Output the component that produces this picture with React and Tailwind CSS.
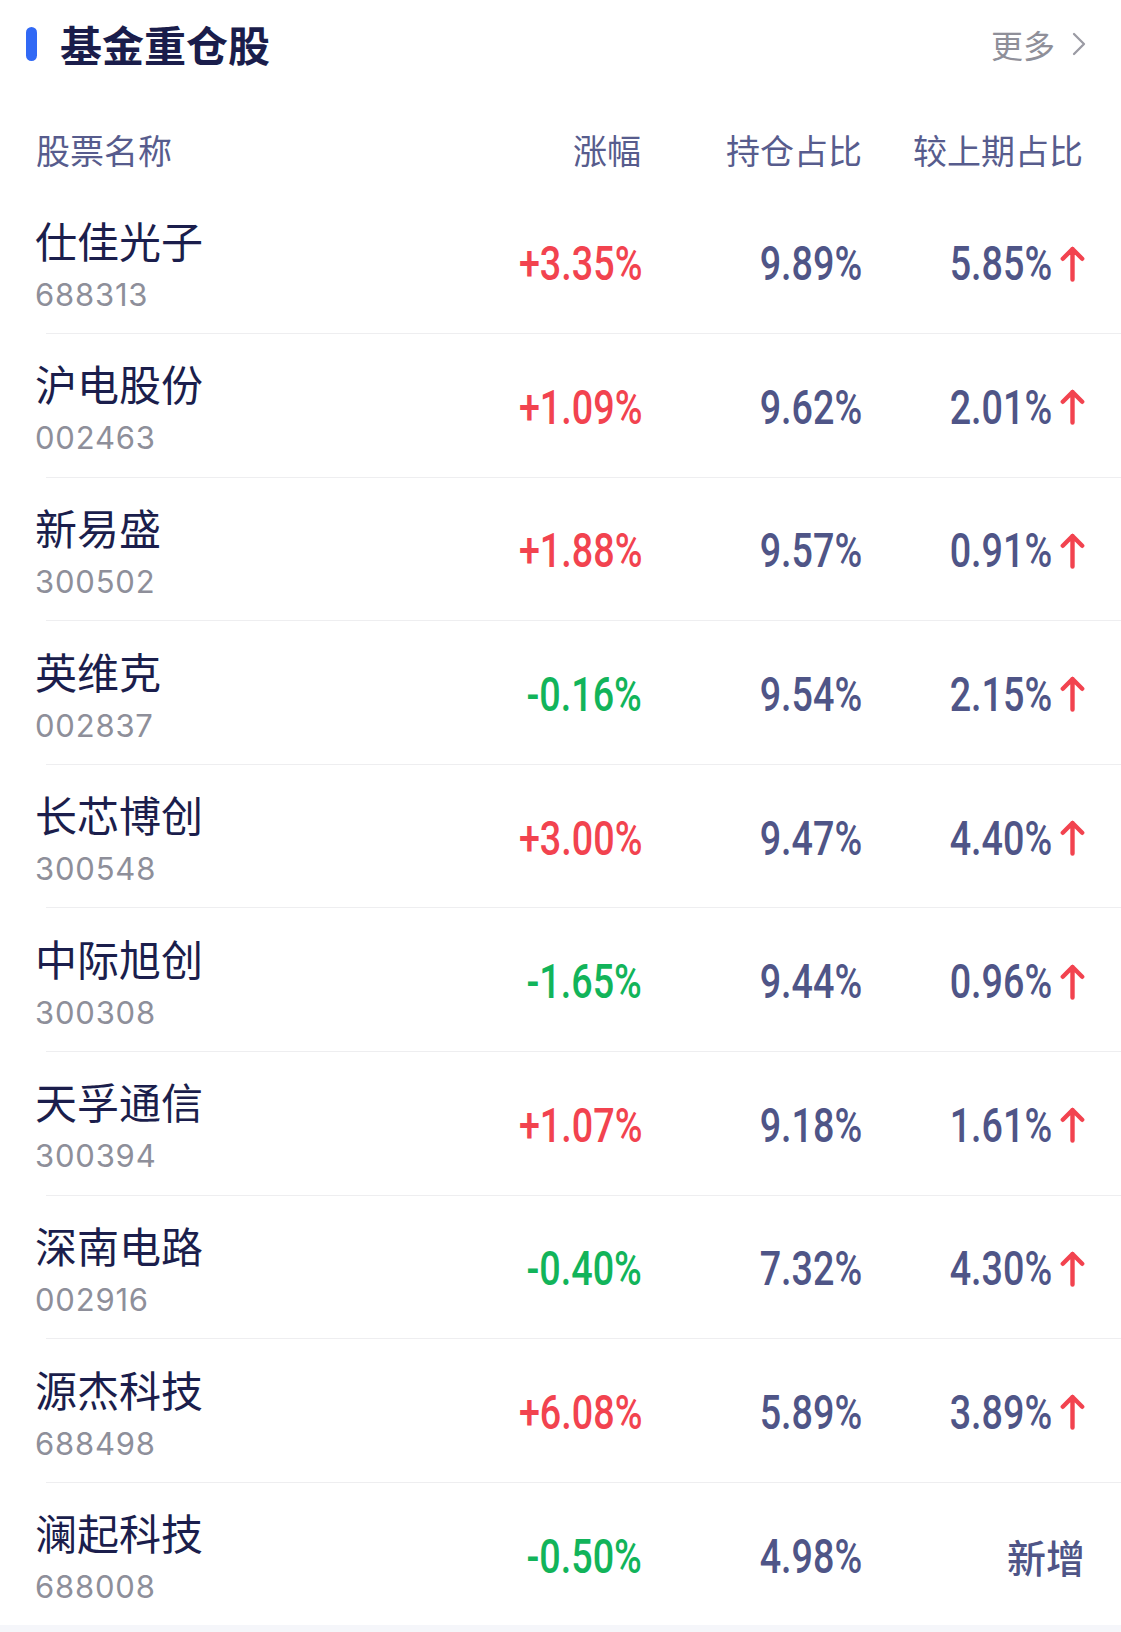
import React from "react";

const rows = [
  ["仕佳光子", "688313", "+3.35%", "9.89%", "5.85%"],
  ["沪电股份", "002463", "+1.09%", "9.62%", "2.01%"],
  ["新易盛", "300502", "+1.88%", "9.57%", "0.91%"],
  ["英维克", "002837", "-0.16%", "9.54%", "2.15%"],
  ["长芯博创", "300548", "+3.00%", "9.47%", "4.40%"],
  ["中际旭创", "300308", "-1.65%", "9.44%", "0.96%"],
  ["天孚通信", "300394", "+1.07%", "9.18%", "1.61%"],
  ["深南电路", "002916", "-0.40%", "7.32%", "4.30%"],
  ["源杰科技", "688498", "+6.08%", "5.89%", "3.89%"],
  ["澜起科技", "688008", "-0.50%", "4.98%", null],
];

const cjk = "font-['PingFang_SC','Noto_Sans_CJK_SC',sans-serif]";
const num = "inline-block origin-right scale-x-[0.77] font-['Roboto','Noto_Sans_CJK_SC',sans-serif] font-medium text-[49px] leading-[49px]";

function UpArrow() {
  return (
    <svg width="25" height="36" viewBox="0 0 25 36" className="ml-[8px] shrink-0">
      <path
        d="M12.5 33.5 V3 M2.8 12.8 L12.5 3 L22.2 12.8"
        fill="none"
        stroke="#f2434f"
        strokeWidth="4.4"
        strokeLinecap="round"
        strokeLinejoin="round"
      />
    </svg>
  );
}

export default function App() {
  return (
    <div className={`w-[1121px] bg-white ${cjk}`}>
      {/* Title */}
      <div className="h-[88px] flex items-center pl-[26px] pr-[34px]">
        <div className="w-[11px] h-[34px] rounded-full bg-[#3169f5]" />
        <div className="ml-[23px] text-[42px] leading-[42px] font-bold text-[#1a1d4b]">基金重仓股</div>
        <div className="ml-auto flex items-center">
          <span className="text-[32px] leading-[32px] text-[#8f8f99]">更多</span>
          <svg width="16" height="24" viewBox="0 0 16 24" className="ml-[16px]">
            <path d="M3 2 L13 12 L3 22" fill="none" stroke="#9b9ba4" strokeWidth="2.3" strokeLinecap="round" strokeLinejoin="round" />
          </svg>
        </div>
      </div>

      {/* Header */}
      <div className="h-[102.4px] pt-[45px] flex items-start pl-[36px] pr-[38px] text-[34px] leading-[34px] text-[#575c8d]">
        <div className="flex-1">股票名称</div>
        <div className="w-[220px] text-right">涨幅</div>
        <div className="w-[221px] text-right">持仓占比</div>
        <div className="w-[221px] text-right">较上期占比</div>
      </div>

      {/* Rows */}
      {rows.map((r, i) => {
        const up = r[2].startsWith("+");
        return (
          <React.Fragment key={r[1]}>
            <div className="h-[142.6px] flex pl-[35px] pr-[36px]">
              <div className="flex-1 flex flex-col pt-[28.5px]">
                <div className="text-[42px] leading-[42px] text-[#1b1e4c]">{r[0]}</div>
                <div className="mt-[18px] text-[31px] leading-[31px] tracking-[0.8px] text-[#8e8f9a] font-['Inter','Liberation_Sans',sans-serif]">
                  {r[1]}
                </div>
              </div>
              <div className="w-[220px] flex items-center justify-end pt-[4px]">
                <span className={`${num} ${up ? "text-[#f2434f]" : "text-[#12b45a]"}`}>{r[2]}</span>
              </div>
              <div className="w-[220px] flex items-center justify-end pt-[4px]">
                <span className={`${num} text-[#4f5587]`}>{r[3]}</span>
              </div>
              <div className="w-[223px] flex items-center justify-end pt-[4px]">
                {r[4] ? (
                  <>
                    <span className={`${num} text-[#4f5587]`}>{r[4]}</span>
                    <UpArrow />
                  </>
                ) : (
                  <span className="text-[39px] leading-[39px] font-medium text-[#4f5587]">新增</span>
                )}
              </div>
            </div>
            {i < rows.length - 1 && <div className="ml-[46px] h-px bg-[#eeeef0]" />}
          </React.Fragment>
        );
      })}
      <div className="h-[7px] bg-[#f5f6fa]" />
    </div>
  );
}
